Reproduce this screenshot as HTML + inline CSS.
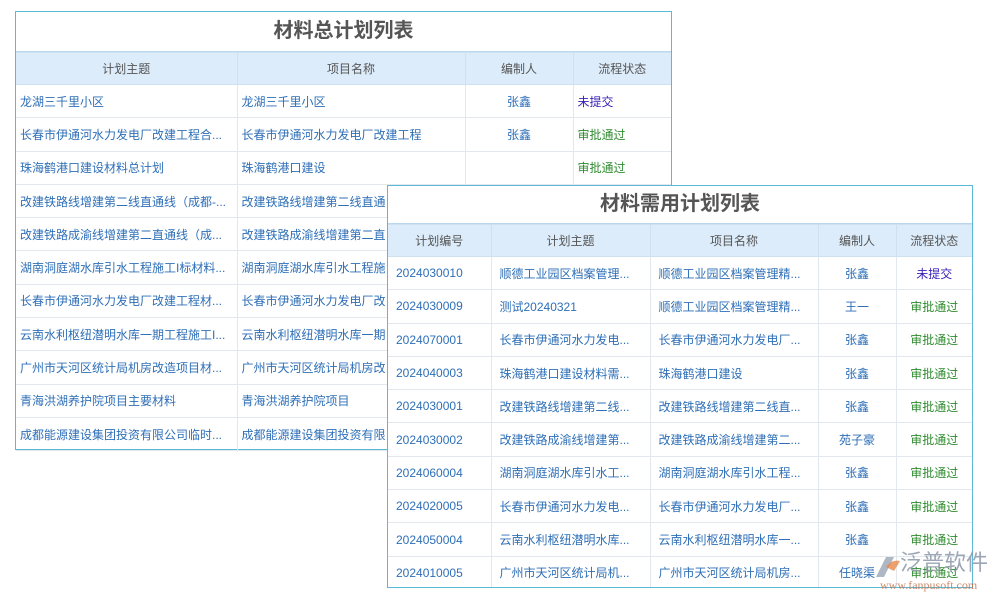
<!DOCTYPE html>
<html><head><meta charset="utf-8"><style>
body{margin:0;width:1000px;height:600px;background:#fff;position:relative;overflow:hidden;font-family:"Liberation Sans","Noto Sans CJK SC",sans-serif}
.t{position:absolute;background:#fff;border:1px solid #5bb8d6;box-sizing:border-box}
.t .ti{height:39px;line-height:39px;text-align:center;font-size:20px;font-weight:bold;color:#555;border-bottom:1px solid #b9d8ee}
table{border-collapse:collapse;width:100%;table-layout:fixed}
td,th{height:32.3px;border:1px solid #e2e8ee;font-size:12px;white-space:nowrap;overflow:hidden;padding:0 4px;color:#2e6fb7;font-weight:normal}
th{background:#dcecfa;color:#555;height:31px;font-size:12px;border-color:#cfe0ee}
tr td:first-child,tr th:first-child{border-left:none}
tr td:last-child,tr th:last-child{border-right:none}
.c{text-align:center}.p{color:#3a1fb8}.g{color:#2e8b2e}
</style></head><body>
<div class="t" style="left:15px;top:11px;width:657px;height:439px">
<div class="ti">材料总计划列表</div>
<table><colgroup><col style="width:221px"><col style="width:228px"><col style="width:108px"><col></colgroup>
<tr><th>计划主题</th><th>项目名称</th><th>编制人</th><th>流程状态</th></tr>
<tr><td>龙湖三千里小区</td><td>龙湖三千里小区</td><td class="c">张鑫</td><td class="p">未提交</td></tr>
<tr><td>长春市伊通河水力发电厂改建工程合...</td><td>长春市伊通河水力发电厂改建工程</td><td class="c">张鑫</td><td class="g">审批通过</td></tr>
<tr><td>珠海鹤港口建设材料总计划</td><td>珠海鹤港口建设</td><td></td><td class="g">审批通过</td></tr>
<tr><td>改建铁路线增建第二线直通线（成都-...</td><td>改建铁路线增建第二线直通</td><td></td><td></td></tr>
<tr><td>改建铁路成渝线增建第二直通线（成...</td><td>改建铁路成渝线增建第二直</td><td></td><td></td></tr>
<tr><td>湖南洞庭湖水库引水工程施工I标材料...</td><td>湖南洞庭湖水库引水工程施</td><td></td><td></td></tr>
<tr><td>长春市伊通河水力发电厂改建工程材...</td><td>长春市伊通河水力发电厂改</td><td></td><td></td></tr>
<tr><td>云南水利枢纽潜明水库一期工程施工I...</td><td>云南水利枢纽潜明水库一期</td><td></td><td></td></tr>
<tr><td>广州市天河区统计局机房改造项目材...</td><td>广州市天河区统计局机房改</td><td></td><td></td></tr>
<tr><td>青海洪湖养护院项目主要材料</td><td>青海洪湖养护院项目</td><td></td><td></td></tr>
<tr><td>成都能源建设集团投资有限公司临时...</td><td>成都能源建设集团投资有限</td><td></td><td></td></tr>
</table></div>
<div class="t" style="left:387px;top:185px;width:586px;height:403px;overflow:hidden">
<div class="ti" style="height:37px;line-height:37px">材料需用计划列表</div>
<table><colgroup><col style="width:103px"><col style="width:159px"><col style="width:168px"><col style="width:78px"><col></colgroup>
<tr><th>计划编号</th><th>计划主题</th><th>项目名称</th><th>编制人</th><th>流程状态</th></tr>
<tr><td style="padding-left:8px">2024030010</td><td style="padding-left:8px">顺德工业园区档案管理...</td><td style="padding-left:8px">顺德工业园区档案管理精...</td><td class="c">张鑫</td><td class="c p">未提交</td></tr>
<tr><td style="padding-left:8px">2024030009</td><td style="padding-left:8px">测试20240321</td><td style="padding-left:8px">顺德工业园区档案管理精...</td><td class="c">王一</td><td class="c g">审批通过</td></tr>
<tr><td style="padding-left:8px">2024070001</td><td style="padding-left:8px">长春市伊通河水力发电...</td><td style="padding-left:8px">长春市伊通河水力发电厂...</td><td class="c">张鑫</td><td class="c g">审批通过</td></tr>
<tr><td style="padding-left:8px">2024040003</td><td style="padding-left:8px">珠海鹤港口建设材料需...</td><td style="padding-left:8px">珠海鹤港口建设</td><td class="c">张鑫</td><td class="c g">审批通过</td></tr>
<tr><td style="padding-left:8px">2024030001</td><td style="padding-left:8px">改建铁路线增建第二线...</td><td style="padding-left:8px">改建铁路线增建第二线直...</td><td class="c">张鑫</td><td class="c g">审批通过</td></tr>
<tr><td style="padding-left:8px">2024030002</td><td style="padding-left:8px">改建铁路成渝线增建第...</td><td style="padding-left:8px">改建铁路成渝线增建第二...</td><td class="c">苑子豪</td><td class="c g">审批通过</td></tr>
<tr><td style="padding-left:8px">2024060004</td><td style="padding-left:8px">湖南洞庭湖水库引水工...</td><td style="padding-left:8px">湖南洞庭湖水库引水工程...</td><td class="c">张鑫</td><td class="c g">审批通过</td></tr>
<tr><td style="padding-left:8px">2024020005</td><td style="padding-left:8px">长春市伊通河水力发电...</td><td style="padding-left:8px">长春市伊通河水力发电厂...</td><td class="c">张鑫</td><td class="c g">审批通过</td></tr>
<tr><td style="padding-left:8px">2024050004</td><td style="padding-left:8px">云南水利枢纽潜明水库...</td><td style="padding-left:8px">云南水利枢纽潜明水库一...</td><td class="c">张鑫</td><td class="c g">审批通过</td></tr>
<tr><td style="padding-left:8px">2024010005</td><td style="padding-left:8px">广州市天河区统计局机...</td><td style="padding-left:8px">广州市天河区统计局机房...</td><td class="c">任晓渠</td><td class="c g">审批通过</td></tr>
</table></div>
<div style="position:absolute;left:872px;top:553px;width:30px;height:26px">
<svg width="30" height="26"><path d="M4 24 L14 4 L22 4 L12 24Z" fill="#9aa5b5" opacity=".8"/><path d="M14 14 Q20 6 28 8 L22 18Z" fill="#e8874a" opacity=".8"/></svg></div>
<div style="position:absolute;left:900px;top:550px;font-size:22px;color:#8c97a8;opacity:.85;white-space:nowrap;line-height:26px">泛普软件</div>
<div style="position:absolute;left:880px;top:578px;font-size:12px;color:#c0704a;font-family:'Liberation Serif',serif;opacity:.8;white-space:nowrap">www.fanpusoft.com</div>
</body></html>
